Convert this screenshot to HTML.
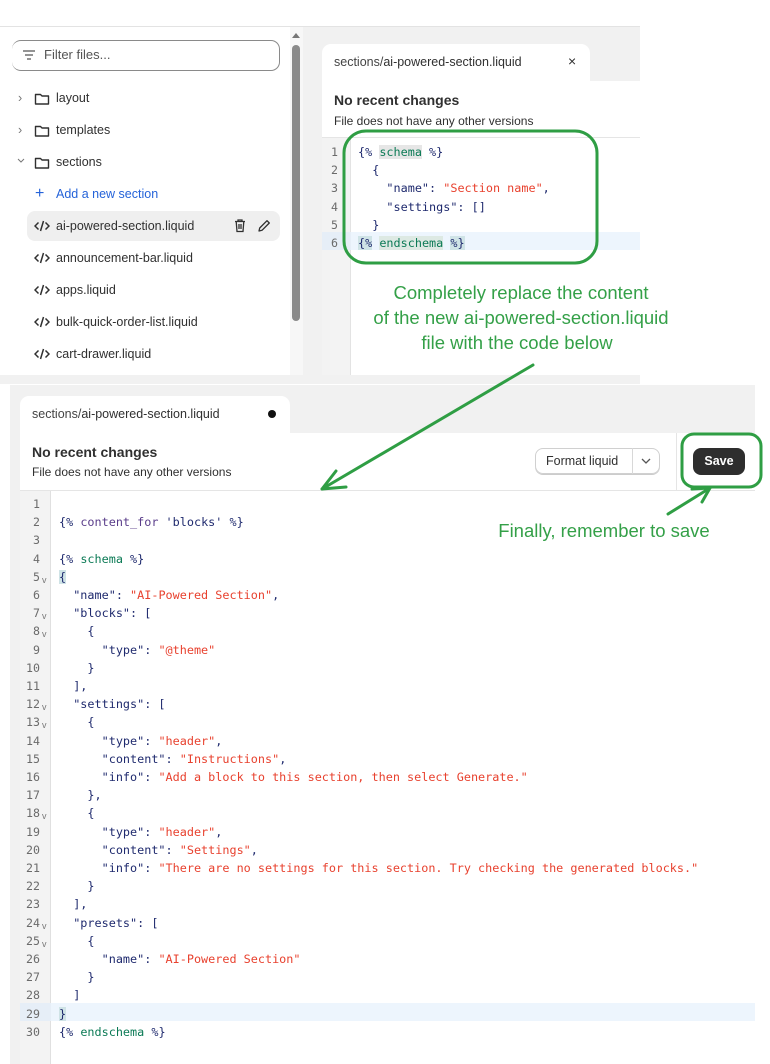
<!DOCTYPE html>
<html><head><meta charset="utf-8"><style>
*{margin:0;padding:0;box-sizing:border-box}
body{width:770px;height:1064px;position:relative;background:#fff;font-family:"Liberation Sans",sans-serif;color:#303030;overflow:hidden}
.abs{position:absolute}
.mono{font-family:"DejaVu Sans Mono","Liberation Mono",monospace;font-size:11.8px;white-space:pre}
.side{font-size:12.5px;color:#303030}
.k{color:#1f2a6e}.s{color:#e8412e}.g{color:#0b7a55}.p{color:#5a3d8a}
.ln{position:absolute;text-align:right;color:#6b6b6b;font-family:"DejaVu Sans Mono","Liberation Mono",monospace;font-size:11.6px}
</style></head><body>
<div class="abs" style="left:0;top:26px;width:640px;height:1px;background:#e3e3e3"></div>
<div class="abs" style="left:303px;top:27px;width:337px;height:356px;background:#f1f1f1"></div>
<div class="abs" style="left:0;top:375px;width:640px;height:9px;background:#f1f1f1"></div>
<div class="abs" style="left:290px;top:27px;width:13px;height:348px;background:#f7f7f7"></div>
<div class="abs" style="left:292px;top:33px;width:0;height:0;border-left:4px solid transparent;border-right:4px solid transparent;border-bottom:5px solid #777"></div>
<div class="abs" style="left:292px;top:45px;width:8px;height:276px;background:#8a8a8a;border-radius:4px"></div>
<div class="abs" style="left:12px;top:40px;width:268px;height:31px;border:1px solid #8a8a8a;border-radius:9px;border-left:none"></div>
<svg class="abs" style="left:22px;top:49px" width="14" height="12"><path d="M1 2h12M3 6h8M5 10h4" stroke="#555" stroke-width="1.3"/></svg>
<div class="abs side" style="left:44px;top:47px;font-size:13px;color:#555">Filter files...</div>
<svg width="0" height="0" style="position:absolute"><defs>
<symbol id="fold" viewBox="0 0 16 14"><path d="M1.5 2.5h5l1.5 1.5h6.5v8h-13z" fill="none" stroke="#303030" stroke-width="1.4" stroke-linejoin="round"/></symbol>
<symbol id="code" viewBox="0 0 16 12"><path d="M4.5 2.5L1 6l3.5 3.5M11.5 2.5L15 6l-3.5 3.5M9.5 1L6.5 11" fill="none" stroke="#303030" stroke-width="1.5"/></symbol>
</defs></svg>
<div class="abs side" style="left:18px;top:91px;color:#777">›</div>
<svg class="abs" style="left:34px;top:92px" width="16" height="14"><use href="#fold"/></svg>
<div class="abs side" style="left:56px;top:91px">layout</div>
<div class="abs side" style="left:18px;top:123px;color:#777">›</div>
<svg class="abs" style="left:34px;top:124px" width="16" height="14"><use href="#fold"/></svg>
<div class="abs side" style="left:56px;top:123px">templates</div>
<svg class="abs" style="left:17px;top:158px" width="8" height="6"><path d="M1 1l3 3 3-3" fill="none" stroke="#777" stroke-width="1"/></svg>
<svg class="abs" style="left:34px;top:156px" width="16" height="14"><use href="#fold"/></svg>
<div class="abs side" style="left:56px;top:155px">sections</div>
<div class="abs side" style="left:35px;top:185px;color:#2563d9;font-size:16px">+</div>
<div class="abs side" style="left:56px;top:187px;color:#2563d9">Add a new section</div>
<div class="abs" style="left:27px;top:211px;width:253px;height:30px;background:#efefef;border-radius:8px"></div>
<svg class="abs" style="left:34px;top:220px" width="16" height="12"><use href="#code"/></svg>
<div class="abs side" style="left:56px;top:219px">ai-powered-section.liquid</div>
<svg class="abs" style="left:233px;top:218px" width="14" height="15"><path d="M2 3.5h10M5 3.5V2h4v1.5M3.2 3.5l.8 10h6l.8-10M6 6v5M8 6v5" fill="none" stroke="#303030" stroke-width="1.3"/></svg>
<svg class="abs" style="left:257px;top:218px" width="14" height="15"><path d="M2 13l.7-3L10 2.7l2.3 2.3L5 12.3z" fill="none" stroke="#303030" stroke-width="1.3" stroke-linejoin="round"/></svg>
<svg class="abs" style="left:34px;top:252px" width="16" height="12"><use href="#code"/></svg>
<div class="abs side" style="left:56px;top:251px">announcement-bar.liquid</div>
<svg class="abs" style="left:34px;top:284px" width="16" height="12"><use href="#code"/></svg>
<div class="abs side" style="left:56px;top:283px">apps.liquid</div>
<svg class="abs" style="left:34px;top:316px" width="16" height="12"><use href="#code"/></svg>
<div class="abs side" style="left:56px;top:315px">bulk-quick-order-list.liquid</div>
<svg class="abs" style="left:34px;top:348px" width="16" height="12"><use href="#code"/></svg>
<div class="abs side" style="left:56px;top:347px">cart-drawer.liquid</div>
<div class="abs" style="left:322px;top:44px;width:268px;height:40px;background:#fff;border-radius:9px 9px 0 0"></div>
<div class="abs" style="left:322px;top:81px;width:318px;height:294px;background:#fff"></div>
<div class="abs" style="left:334px;top:55px;font-size:12.5px"><span style="color:#444">sections/</span>ai-powered-section.liquid</div>
<div class="abs" style="left:568px;top:53px;font-size:14px">×</div>
<div class="abs" style="left:334px;top:92px;font-size:14px;font-weight:600">No recent changes</div>
<div class="abs" style="left:334px;top:114px;font-size:12px">File does not have any other versions</div>
<div class="abs" style="left:322px;top:137px;width:318px;height:1px;background:#e5e5e5"></div>
<div class="abs" style="left:322px;top:138px;width:29px;height:237px;background:#f3f3f3;border-right:1px solid #e3e3e3"></div>
<div class="abs" style="left:351px;top:232px;width:289px;height:18px;background:#edf5fd"></div>
<div class="abs" style="left:322px;top:232px;width:29px;height:18px;background:#e6eef7"></div>
<div class="ln" style="left:322px;top:143px;width:16px;line-height:18.2px">1<br>2<br>3<br>4<br>5<br>6</div>
<div class="abs mono" style="left:358px;top:143px;line-height:18.2px"><span class="k">{% <span class="g" style="background:#e6e6e6">schema</span> %}</span>
<span class="k">  {</span>
<span class="k">    "name": </span><span class="s">"Section name"</span><span class="k">,</span>
<span class="k">    "settings": []</span>
<span class="k">  }</span>
<span class="k"><span style="background:#cfe3e6">{%</span> <span class="g" style="background:#dde9e3">endschema</span> <span style="background:#cfe3e6">%}</span></span></div>
<div class="abs" style="left:10px;top:385px;width:745px;height:48px;background:#f1f1f1"></div>
<div class="abs" style="left:10px;top:385px;width:10px;height:679px;background:#f1f1f1"></div>
<div class="abs" style="left:20px;top:396px;width:270px;height:40px;background:#fff;border-radius:9px 9px 0 0"></div>
<div class="abs" style="left:20px;top:433px;width:735px;height:631px;background:#fff"></div>
<div class="abs" style="left:32px;top:407px;font-size:12.5px"><span style="color:#444">sections/</span>ai-powered-section.liquid</div>
<div class="abs" style="left:268px;top:410px;width:8px;height:8px;border-radius:50%;background:#111"></div>
<div class="abs" style="left:32px;top:444px;font-size:14px;font-weight:600">No recent changes</div>
<div class="abs" style="left:32px;top:465px;font-size:12px">File does not have any other versions</div>
<div class="abs" style="left:535px;top:448px;width:125px;height:26px;border:1px solid #d0d0d0;border-radius:8px;box-shadow:0 1px 0 #ccc"></div>
<div class="abs" style="left:632px;top:448px;width:1px;height:26px;background:#d8d8d8"></div>
<div class="abs" style="left:546px;top:454px;font-size:12.5px">Format liquid</div>
<svg class="abs" style="left:641px;top:458px" width="10" height="6"><path d="M1 1l4 4 4-4" fill="none" stroke="#555" stroke-width="1.3"/></svg>
<div class="abs" style="left:676px;top:433px;width:1px;height:57px;background:#e5e5e5"></div>
<div class="abs" style="left:693px;top:448px;width:52px;height:27px;background:#2e2e2e;border-radius:8px;color:#fff;font-weight:700;font-size:12.5px;text-align:center;line-height:27px">Save</div>
<div class="abs" style="left:20px;top:490px;width:735px;height:1px;background:#e5e5e5"></div>
<div class="abs" style="left:20px;top:491px;width:31px;height:573px;background:#f3f3f3;border-right:1px solid #e0e0e0"></div>
<div class="abs" style="left:51px;top:1003px;width:704px;height:18px;background:#edf5fd"></div>
<div class="abs" style="left:20px;top:1003px;width:31px;height:18px;background:#e6eef7"></div>
<div class="ln" style="left:20px;top:495px;width:20px;line-height:18.2px">1<br>2<br>3<br>4<br>5<br>6<br>7<br>8<br>9<br>10<br>11<br>12<br>13<br>14<br>15<br>16<br>17<br>18<br>19<br>20<br>21<br>22<br>23<br>24<br>25<br>26<br>27<br>28<br>29<br>30</div>
<div class="abs" style="left:42px;top:498px;line-height:18.2px;font-size:9px;color:#777;white-space:pre">



v

v
v



v
v




v





v
v</div>
<div class="abs mono" style="left:59px;top:495px;line-height:18.2px">
<span class="k">{% </span><span class="p">content_for</span><span class="k"> 'blocks' %}</span>

<span class="k">{% <span class="g">schema</span> %}</span>
<span class="k" style="background:#cfe3e6">{</span>
<span class="k">  "name": </span><span class="s">"AI-Powered Section"</span><span class="k">,</span>
<span class="k">  "blocks": [</span>
<span class="k">    {</span>
<span class="k">      "type": </span><span class="s">"@theme"</span>
<span class="k">    }</span>
<span class="k">  ],</span>
<span class="k">  "settings": [</span>
<span class="k">    {</span>
<span class="k">      "type": </span><span class="s">"header"</span><span class="k">,</span>
<span class="k">      "content": </span><span class="s">"Instructions"</span><span class="k">,</span>
<span class="k">      "info": </span><span class="s">"Add a block to this section, then select Generate."</span>
<span class="k">    },</span>
<span class="k">    {</span>
<span class="k">      "type": </span><span class="s">"header"</span><span class="k">,</span>
<span class="k">      "content": </span><span class="s">"Settings"</span><span class="k">,</span>
<span class="k">      "info": </span><span class="s">"There are no settings for this section. Try checking the generated blocks."</span>
<span class="k">    }</span>
<span class="k">  ],</span>
<span class="k">  "presets": [</span>
<span class="k">    {</span>
<span class="k">      "name": </span><span class="s">"AI-Powered Section"</span>
<span class="k">    }</span>
<span class="k">  ]</span>
<span class="k" style="background:#cfe3e6">}</span>
<span class="k">{% <span class="g">endschema</span> %}</span></div>
<svg class="abs" style="left:0;top:0" width="770" height="1064">
<rect x="344" y="131" width="253" height="132" rx="22" fill="none" stroke="#2f9e44" stroke-width="3"/>
<rect x="682" y="434" width="79" height="53" rx="12" fill="none" stroke="#2f9e44" stroke-width="3"/>
<path d="M533 365L322 489M322 489l24-2M322 489l14-18" fill="none" stroke="#2f9e44" stroke-width="3" stroke-linecap="round"/>
<path d="M668 514L710 488M710 488l-18 1M710 488l-8 14" fill="none" stroke="#2f9e44" stroke-width="3" stroke-linecap="round"/>
<g font-family="Liberation Sans, sans-serif" font-size="18.5" fill="#34a048" text-anchor="middle">
<text x="521" y="299">Completely replace the content</text>
<text x="521" y="324">of the new ai-powered-section.liquid</text>
<text x="517" y="349">file with the code below</text>
<text x="604" y="537">Finally, remember to save</text>
</g>
</svg>
</body></html>
